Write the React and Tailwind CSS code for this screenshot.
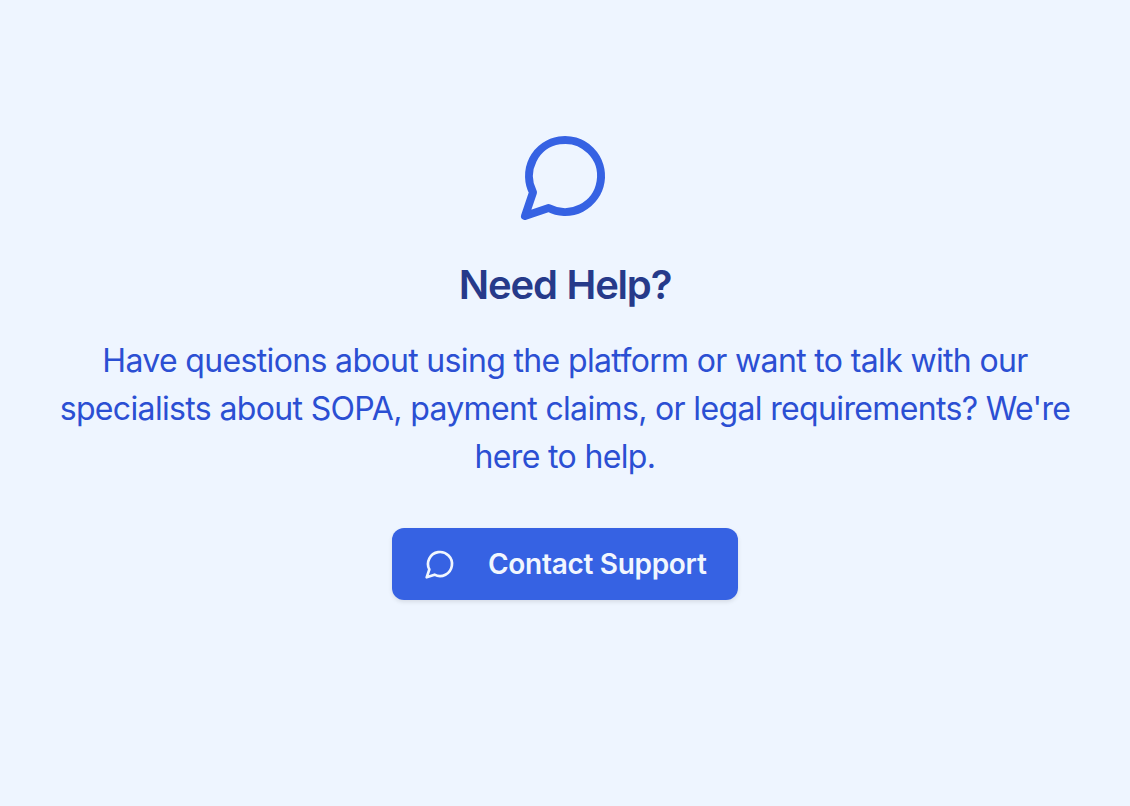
const lines = [
  'Have questions about using the platform or want to talk with our',
  "specialists about SOPA, payment claims, or legal requirements? We're",
  'here to help.',
];

function MessageCircle({ className }) {
  return (
    <svg
      viewBox="0 0 24 24"
      fill="none"
      stroke="currentColor"
      strokeWidth="2"
      strokeLinecap="round"
      strokeLinejoin="round"
      className={className}
    >
      <path d="M7.9 20A9 9 0 1 0 4 16.1L2 22Z" />
    </svg>
  );
}

export default function App() {
  return (
    <div className="flex h-[806px] w-full flex-col items-center bg-[#eef5ff] pt-32 font-['Inter',sans-serif]">
      <MessageCircle className="h-24 w-24 text-[#3662e3]" />

      <h3 className="mt-[33px] text-[40px] leading-[56px] font-[640] tracking-[-1.2px] [word-spacing:1px] whitespace-nowrap text-[#263a8a]">
        Need Help?
      </h3>

      <p className="mt-6 text-center text-[32px] leading-[48px] font-[430] tracking-[-0.65px] text-[#2b4fd3]">
        {lines.map((line) => (
          <span key={line} className="block whitespace-nowrap">
            {line}
          </span>
        ))}
      </p>

      <button className="mt-[47px] flex h-[72px] w-[346px] items-center rounded-xl bg-[#3662e3] pl-8 text-[28px] font-semibold tracking-[-0.3px] whitespace-nowrap text-[#f1f6fe] shadow-[0_2px_4px_rgba(0,0,0,0.1)]">
        <MessageCircle className="mr-8 h-8 w-8 shrink-0" />
        Contact Support
      </button>
    </div>
  );
}
